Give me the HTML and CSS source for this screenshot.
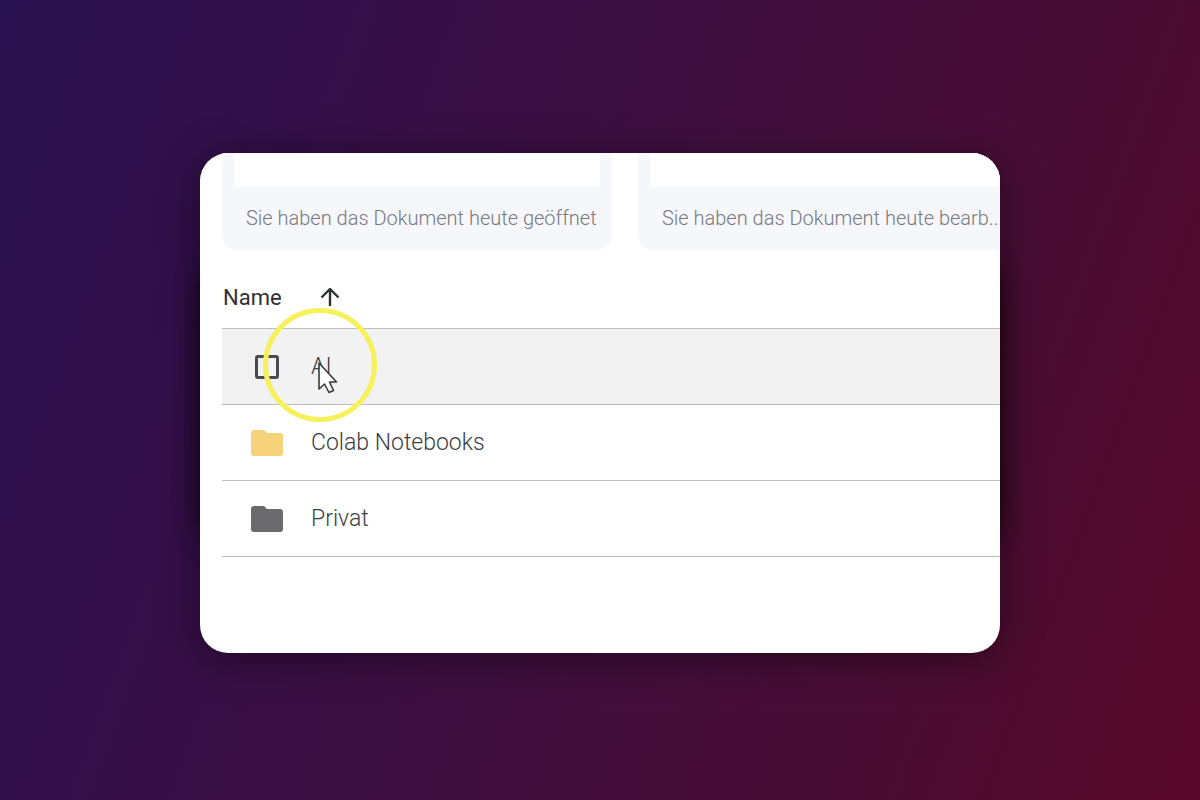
FILE: index.html
```
<!DOCTYPE html>
<html lang="de">
<head>
	<meta charset="UTF-8">
	<title>Drive</title>
	<link rel="stylesheet" href="styles.css">
</head>
<body>
<div class="stage">
<div class="window">
	<div class="recent">
		<div class="doc">
			<div class="preview"></div>
			<p class="info">Sie haben das Dokument heute geöffnet</p>
		</div>
		<div class="doc">
			<div class="preview"></div>
			<p class="info">Sie haben das Dokument heute bearb...</p>
		</div>
	</div>
	<table class="files">
		<thead>
			<tr>
				<th colspan="2">
					<button class="sort" type="button">Name
						<svg width="20" height="20" viewBox="0 0 20 20"><path d="M10 18V1M1.500 9.500L10 1l8.500 8.500" fill="none" stroke="#303134" stroke-width="2.400"/></svg>
					</button>
				</th>
			</tr>
		</thead>
		<tbody>
			<tr class="hover">
				<td class="icon"><input class="check" type="checkbox" id="ai"></td>
				<td>
					<div class="target">
						<label for="ai">AI</label>
						<span class="ring"></span>
						<svg class="cursor" width="22" height="34" viewBox="0 0 22 34"><path d="M2 2v26l5.500-5 4.500 8.500 4.500-2-4-8.500H19.500z" fill="#fff" stroke="#3a3a3e" stroke-width="1.600" stroke-linejoin="round"/></svg>
					</div>
				</td>
			</tr>
			<tr>
				<td class="icon"><svg width="32" height="26" viewBox="0 0 32 26"><path d="M3 0h10l3 3h13a3 3 0 0 1 3 3v17a3 3 0 0 1-3 3H3a3 3 0 0 1-3-3V3a3 3 0 0 1 3-3z" fill="#f6d27a"/></svg></td>
				<td>Colab Notebooks</td>
			</tr>
			<tr>
				<td class="icon"><svg width="32" height="26" viewBox="0 0 32 26"><path d="M3 0h10l3 3h13a3 3 0 0 1 3 3v17a3 3 0 0 1-3 3H3a3 3 0 0 1-3-3V3a3 3 0 0 1 3-3z" fill="#6b6b6d"/></svg></td>
				<td>Privat</td>
			</tr>
		</tbody>
	</table>
</div>
</div>
</body>
</html>
```
FILE: styles.css
```
* { box-sizing: border-box; }
body { margin: 0; min-height: 100vh; padding: 6px 24px 0; display: flex; align-items: center; justify-content: center; background: linear-gradient(110deg, #28124f 0%, #350f48 26%, #400f3e 52%, #4a0d32 78%, #5a0929 100%); font: 300 23px/28px Roboto, "Liberation Sans", sans-serif; color: #3c3d42; }
p { margin: 0; }

.stage { position: relative; width: 100%; max-width: 800px; border-radius: 28px; box-shadow: 0 6px 44px rgba(0,0,0,0.45); }
/* darker glow left and right of the window */
.stage:before { content: ""; position: absolute; top: 22%; bottom: 22%; left: 0; right: 0; border-radius: 28px; box-shadow: 0 0 24px rgba(0,0,0,0.75); }
.window { position: relative; min-height: 500px; padding-left: 22px; border-radius: 28px; background: #fff; overflow: hidden; }

.recent { display: flex; gap: 26px; }
.doc { flex: 0 0 390px; padding: 0 12px 18px; border-radius: 0 0 16px 16px; background: #f5f7fb; }
.preview { height: 34px; background: #fff; }
.info { padding: 17px 0 0 12px; font-size: 20px; white-space: nowrap; color: #77797e; }

.files { width: 100%; border-collapse: collapse; }
.files th { height: 78px; padding: 18px 0 0 1px; text-align: left; }
.files td { height: 76px; padding: 2px 0 0; border-top: 1px solid #bebebe; border-bottom: 1px solid #bebebe; }
.files .icon { width: 89px; padding-left: 29px; }
.icon svg { display: block; }
.hover { background: #f2f2f2; }

.sort { display: flex; align-items: center; gap: 38px; padding: 0; border: 0; background: none; font: 400 22px/28px Roboto, "Liberation Sans", sans-serif; color: #303134; }
.check { appearance: none; display: block; width: 24px; height: 24px; margin: 0 0 0 4px; border: 3px solid #4a4b4e; border-radius: 3px; }

.target { position: relative; }
.ring { position: absolute; left: -48px; top: -45px; width: 114px; height: 114px; border: 5px solid #f6f05a; border-radius: 50%; pointer-events: none; }
.cursor { position: absolute; left: 6px; top: 8px; }
```
